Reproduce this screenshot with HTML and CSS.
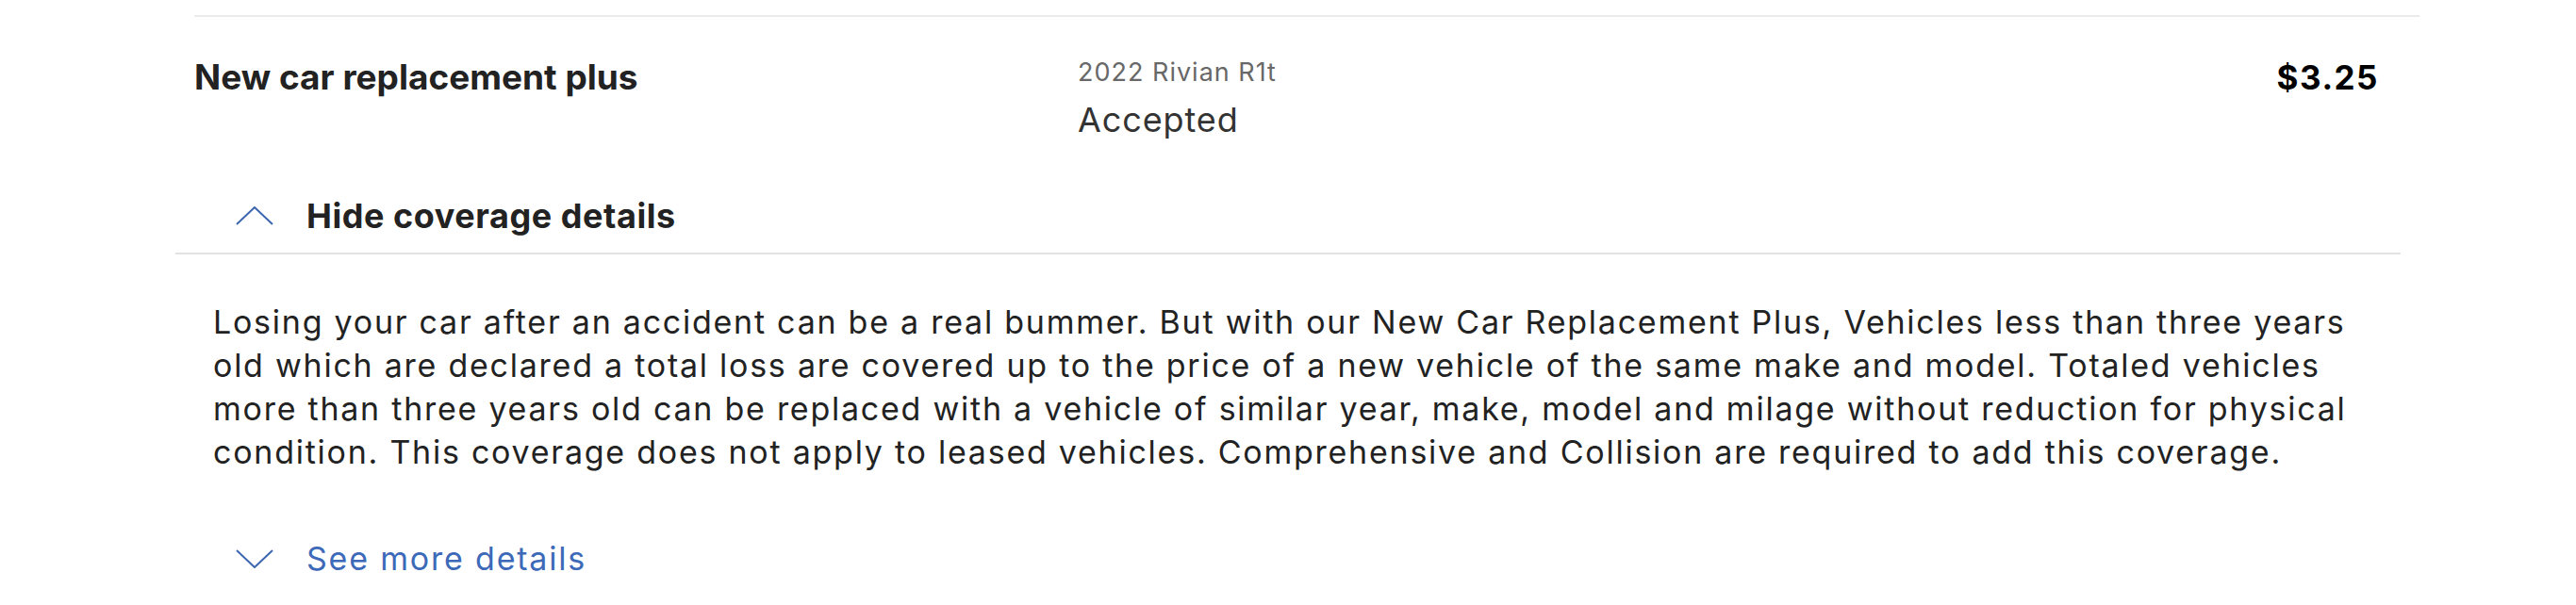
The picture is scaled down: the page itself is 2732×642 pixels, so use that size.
FILE: index.html
```html
<!DOCTYPE html>
<html lang="en">
<head>
<meta charset="utf-8">
<title>Coverage</title>
<link rel="stylesheet" href="styles.css">
</head>
<body>
<section class="coverage">
  <div class="summary">
    <div class="name">New car replacement plus</div>
    <div class="vehicle">
      <div class="vehicle-name">2022 Rivian R1t</div>
      <div class="status">Accepted</div>
    </div>
    <div class="price">$3.25</div>
  </div>
  <div class="toggle toggle-hide">
    <svg class="chev" width="40" height="20" viewBox="0 0 40 20"><polyline points="1,19 20,1 39,19" fill="none" stroke="#3d66b0" stroke-width="2"/></svg>
    <span class="label">Hide coverage details</span>
  </div>
  <div class="details">
    <p class="desc">Losing your car after an accident can be a real bummer. But with our New Car Replacement Plus, Vehicles less than three years old which are declared a total loss are covered up to the price of a new vehicle of the same make and model. Totaled vehicles more than three years old can be replaced with a vehicle of similar year, make, model and milage without reduction for physical condition. This coverage does not apply to leased vehicles. Comprehensive and Collision are required to add this coverage.</p>
    <div class="toggle toggle-more">
      <svg class="chev" width="40" height="20" viewBox="0 0 40 20"><polyline points="1,1 20,19 39,1" fill="none" stroke="#3d66b0" stroke-width="2"/></svg>
      <span class="label">See more details</span>
    </div>
  </div>
</section>
</body>
</html>
```
FILE: styles.css
```css
html, body {
  margin: 0;
  padding: 0;
  background: #ffffff;
}
body {
  padding-top: 16px;
  font-family: "Inter", "Liberation Sans", sans-serif;
  color: #222222;
}
.coverage {
  margin-left: 186px;
  width: 2360px;
}
.summary {
  display: grid;
  grid-template-columns: 937px 1fr auto;
  margin: 0 -20px 0 20px;
  padding: 42px 43px 0 0;
  border-top: 2px solid #ebebeb;
}
.name {
  font-size: 37px;
  font-weight: 700;
  line-height: 44px;
  color: #222222;
}
.vehicle-name {
  font-size: 27px;
  line-height: 34px;
  letter-spacing: 1px;
  color: #686868;
}
.status {
  margin-top: 11px;
  font-size: 36px;
  line-height: 44px;
  letter-spacing: 0.9px;
  color: #333333;
}
.price {
  font-size: 35px;
  font-weight: 700;
  line-height: 44px;
  letter-spacing: 1.5px;
  color: #000000;
}
.toggle {
  display: flex;
  align-items: center;
  gap: 35px;
  padding-left: 64px;
}
.toggle-hide {
  padding-top: 58px;
  padding-bottom: 17px;
  border-bottom: 2px solid #e2e2e2;
}
.toggle-hide .label {
  font-size: 36px;
  font-weight: 700;
  line-height: 44px;
  letter-spacing: 0.55px;
  color: #222222;
}
.toggle-more .label {
  font-size: 34px;
  line-height: 44px;
  letter-spacing: 1.8px;
  color: #3d6ab8;
}
.chev {
  display: block;
  flex: none;
}
.details {
  padding-top: 49px;
}
.desc {
  margin: 0 0 68px 40px;
  width: 2290px;
  font-size: 34px;
  line-height: 46px;
  letter-spacing: 1.75px;
  color: #222222;
}
```
